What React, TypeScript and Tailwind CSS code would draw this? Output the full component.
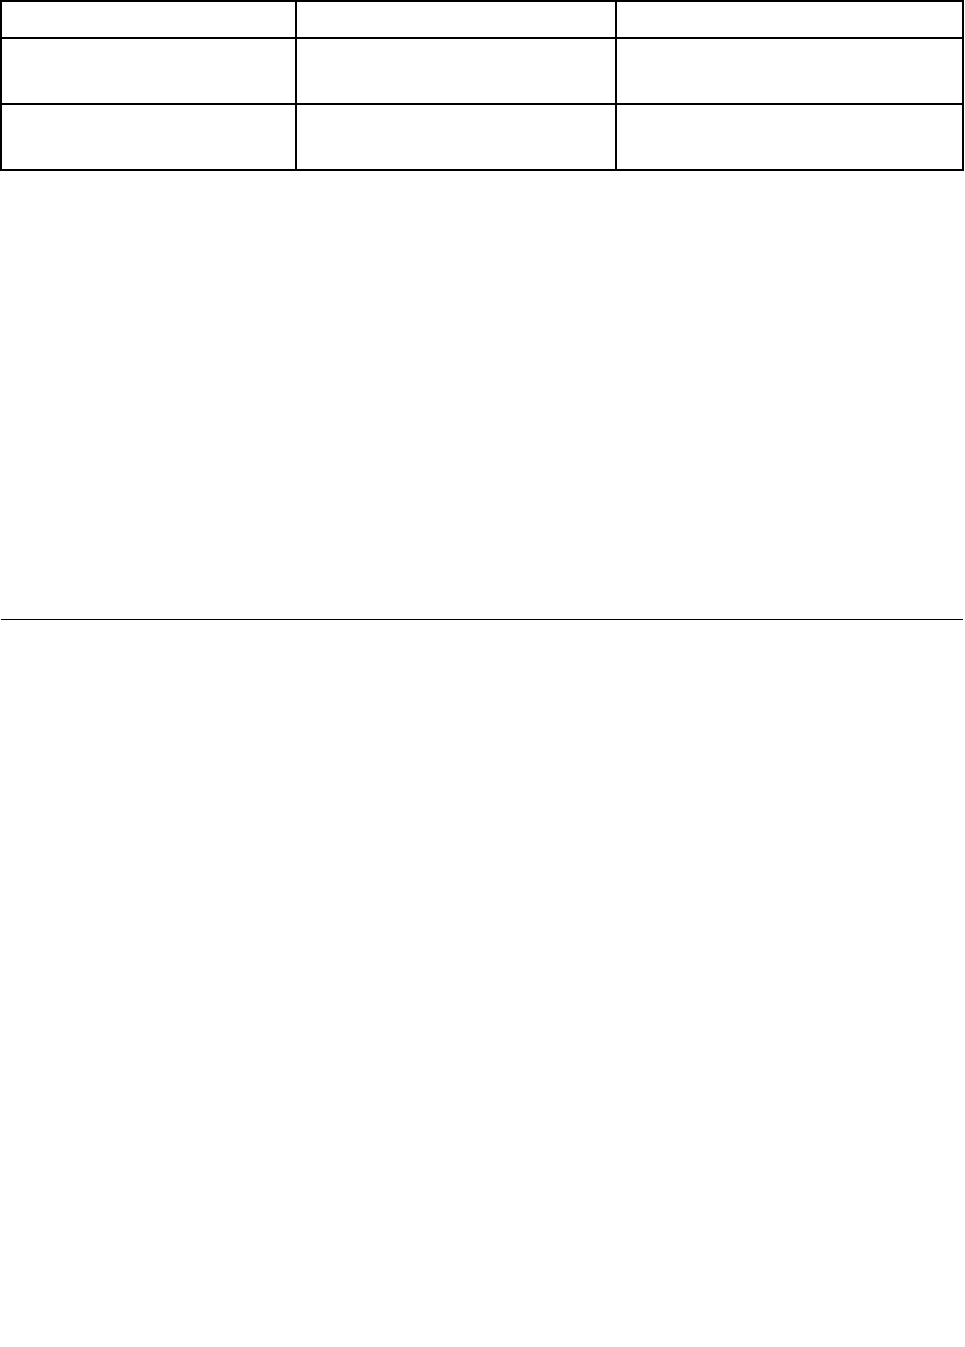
const ROWS = [35, 64, 64]

export default function App() {
  return (
    <div className="min-h-[1347px] w-[965px] bg-white font-['Liberation_Sans',sans-serif]">
      {/* empty three column table */}
      <div className="grid w-[964px] grid-cols-[293px_318px_345px] gap-[2px] bg-black p-[2px]">
        {ROWS.map((h, r) =>
          [0, 1, 2].map(c => (
            <div
              key={`${r}-${c}`}
              className={`bg-white ${h === 35 ? 'h-[35px]' : 'h-[64px]'}`}
            />
          ))
        )}
      </div>

      {/* rule */}
      <div className="mt-[448px] ml-px h-px w-[962px] bg-black" />
    </div>
  )
}
